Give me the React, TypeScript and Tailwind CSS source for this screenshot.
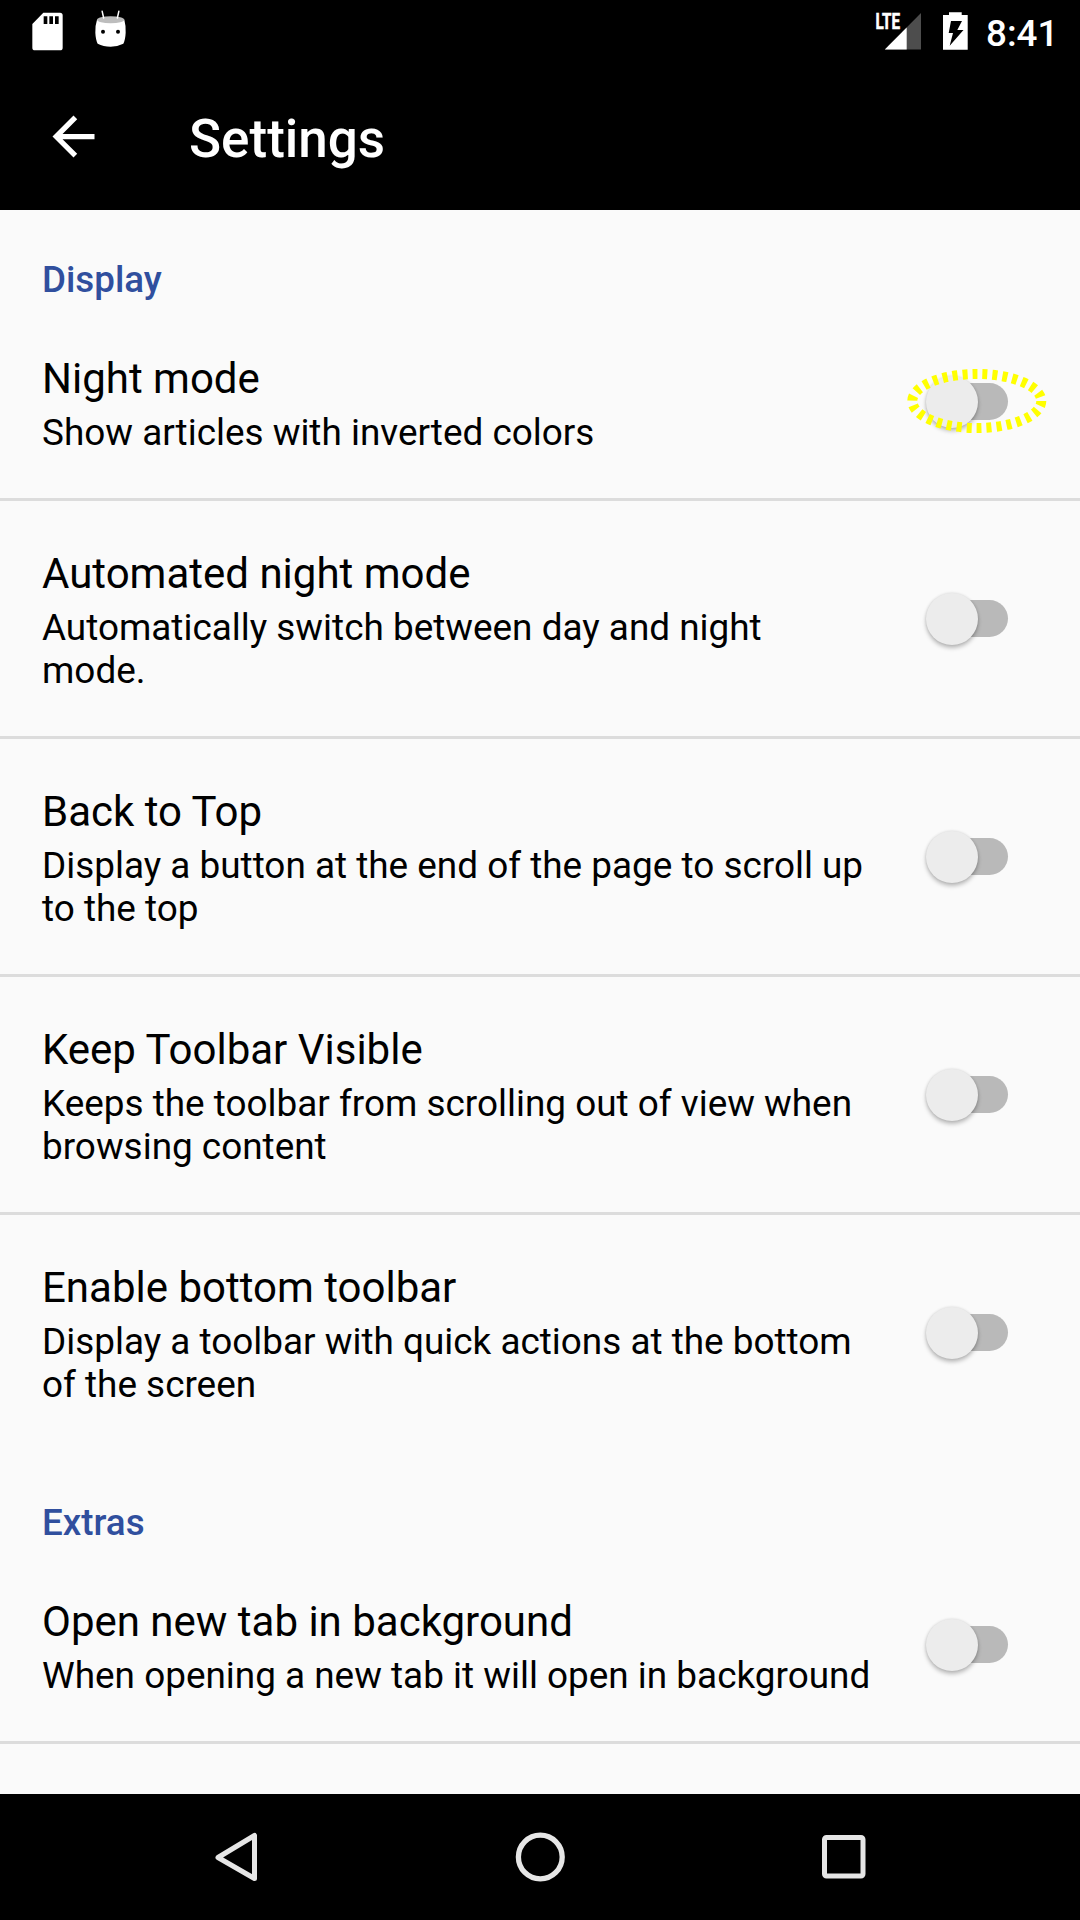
import type { ReactNode } from 'react';

function StatusBar() {
  return (
    <div className="flex h-[63px] items-start justify-between text-white">
      <svg width="200" height="63" viewBox="0 0 600 189">
        <path fill="#fff" fillRule="evenodd" d="M130 38H180Q188 38 188 46V143Q188 151 180 151H105Q97 151 97 143V72ZM131 49V72H142V49ZM148 49V72H159V49ZM165 49V72H176V49Z" />
        <path fill="#fff" d="M291 59Q332 76 373 59Q378 77 377 98Q376 119 370 131Q352 140 332 140Q310 140 293 131Q287 119 286 98Q285 77 291 59Z" />
        <ellipse cx="332" cy="59.500" rx="41" ry="10.500" fill="#bdbdbd" />
        <path d="M306.500 34L311 54M356.500 34L352 54" stroke="#fff" strokeWidth="4.500" strokeLinecap="round" />
        <circle cx="309" cy="95" r="6" fill="#000" />
        <circle cx="354" cy="95" r="6" fill="#000" />
      </svg>
      <div className="flex">
        <svg width="130" height="63" viewBox="0 0 130 63">
          <text x="25.500" y="29" fill="#fff" stroke="#fff" strokeWidth="0.600" fontFamily="Roboto" fontWeight="700" fontSize="22" textLength="24.500" lengthAdjust="spacingAndGlyphs">LTE</text>
          <path d="M34.800 49.500L71 13V49.500Z" fill="#4d4d4d" />
          <path d="M34.800 49.500L56.700 27.500V49.500Z" fill="#fff" />
          <path fill="#fff" fillRule="evenodd" d="M99 12.200H111.700V15H117.700V49.700H93V15H99ZM101 21L98.700 33H103L99.700 45.700L113.500 30H107.300L112 21Z" />
        </svg>
        <div className="w-[100px] pt-[12px] pl-[6px] text-[36.75px] leading-[43px] font-medium">8:41</div>
      </div>
    </div>
  );
}

function Switch({ nudged, children }: { nudged?: boolean; children?: ReactNode }) {
  return (
    <div className={nudged ? 'relative -mt-px mr-[72px] flex h-[53px] w-[83px] shrink-0 items-center' : 'relative mr-[72px] flex h-[53px] w-[83px] shrink-0 items-center'}>
      <div className="ml-[10px] h-[37px] w-[73px] rounded-full bg-[#b9b9b9]" />
      <div className="absolute top-[0.5px] left-[0.5px] size-[52.5px] rounded-full bg-[#ececec] shadow-[0_3px_4px_rgba(0,0,0,0.25),0_0_3px_rgba(0,0,0,0.12)]" />
      {children}
    </div>
  );
}

function FocusRing() {
  return (
    <svg className="absolute -top-[6px] -left-[19px]" width="141" height="66" viewBox="0 0 141 66">
      <ellipse cx="70.800" cy="32" rx="64.500" ry="27" fill="none" stroke="#ff0" strokeWidth="10" strokeDasharray="5 5" />
    </svg>
  );
}

function Heading({ children }: { children: ReactNode }) {
  return <h2 className="h-[96px] pt-[48px] pl-[42px] text-[36.75px] leading-[43px] font-medium text-[#304f9e]">{children}</h2>;
}

function Row({ title, lines, ring, last }: { title: string; lines: string[]; ring?: boolean; last?: boolean }) {
  return (
    <div className={last ? 'flex items-center justify-between border-b-[3px] border-transparent' : 'flex items-center justify-between border-b-[3px] border-[#dcdcdc]'}>
      <div className="pt-[48px] pb-[44px] pl-[42px] whitespace-nowrap text-black">
        <div className="mb-[8px] text-[42px] leading-[49px]">{title}</div>
        {lines.map((line) => (
          <div key={line} className="text-[36.9px] leading-[43px]">{line}</div>
        ))}
      </div>
      <Switch nudged={lines.length === 1}>{ring && <FocusRing />}</Switch>
    </div>
  );
}

export default function App() {
  return (
    <div className="flex h-[1920px] w-[1080px] flex-col overflow-hidden bg-[#fafafa] font-[Roboto,sans-serif]">
      <header className="h-[210px] shrink-0 bg-black text-white">
        <StatusBar />
        <div className="flex h-[147px] items-center">
          <svg className="ml-[42px] size-[63px]" viewBox="0 0 24 24" fill="#fff">
            <path d="M20 11H7.830l5.590-5.590L12 4l-8 8 8 8 1.410-1.410L7.830 13H20v-2z" />
          </svg>
          <h1 className="mt-[4px] ml-[84px] text-[53px] leading-[62px] font-medium">Settings</h1>
        </div>
      </header>
      <main className="min-h-0 flex-1 overflow-hidden">
        <Heading>Display</Heading>
        <Row title="Night mode" lines={['Show articles with inverted colors']} ring />
        <Row title="Automated night mode" lines={['Automatically switch between day and night', 'mode.']} />
        <Row title="Back to Top" lines={['Display a button at the end of the page to scroll up', 'to the top']} />
        <Row title="Keep Toolbar Visible" lines={['Keeps the toolbar from scrolling out of view when', 'browsing content']} />
        <Row title="Enable bottom toolbar" lines={['Display a toolbar with quick actions at the bottom', 'of the screen']} last />
        <Heading>Extras</Heading>
        <Row title="Open new tab in background" lines={['When opening a new tab it will open in background']} />
      </main>
      <nav className="flex h-[126px] shrink-0 items-center justify-between bg-black pr-[209px] pl-[210px]">
        <svg width="54" height="54" viewBox="0 0 54 54" fill="none" stroke="#e6e6e6" strokeWidth="5" strokeLinejoin="round">
          <path d="M44.500 5.500V48.500L8 27.500Z" />
        </svg>
        <svg width="54" height="54" viewBox="0 0 54 54" fill="none" stroke="#e6e6e6" strokeWidth="5.300">
          <circle cx="26.300" cy="27" r="21.900" />
        </svg>
        <svg width="54" height="54" viewBox="0 0 54 54" fill="none" stroke="#e6e6e6" strokeWidth="5">
          <rect x="7.500" y="7.500" width="38.500" height="38.500" rx="2" />
        </svg>
      </nav>
    </div>
  );
}
